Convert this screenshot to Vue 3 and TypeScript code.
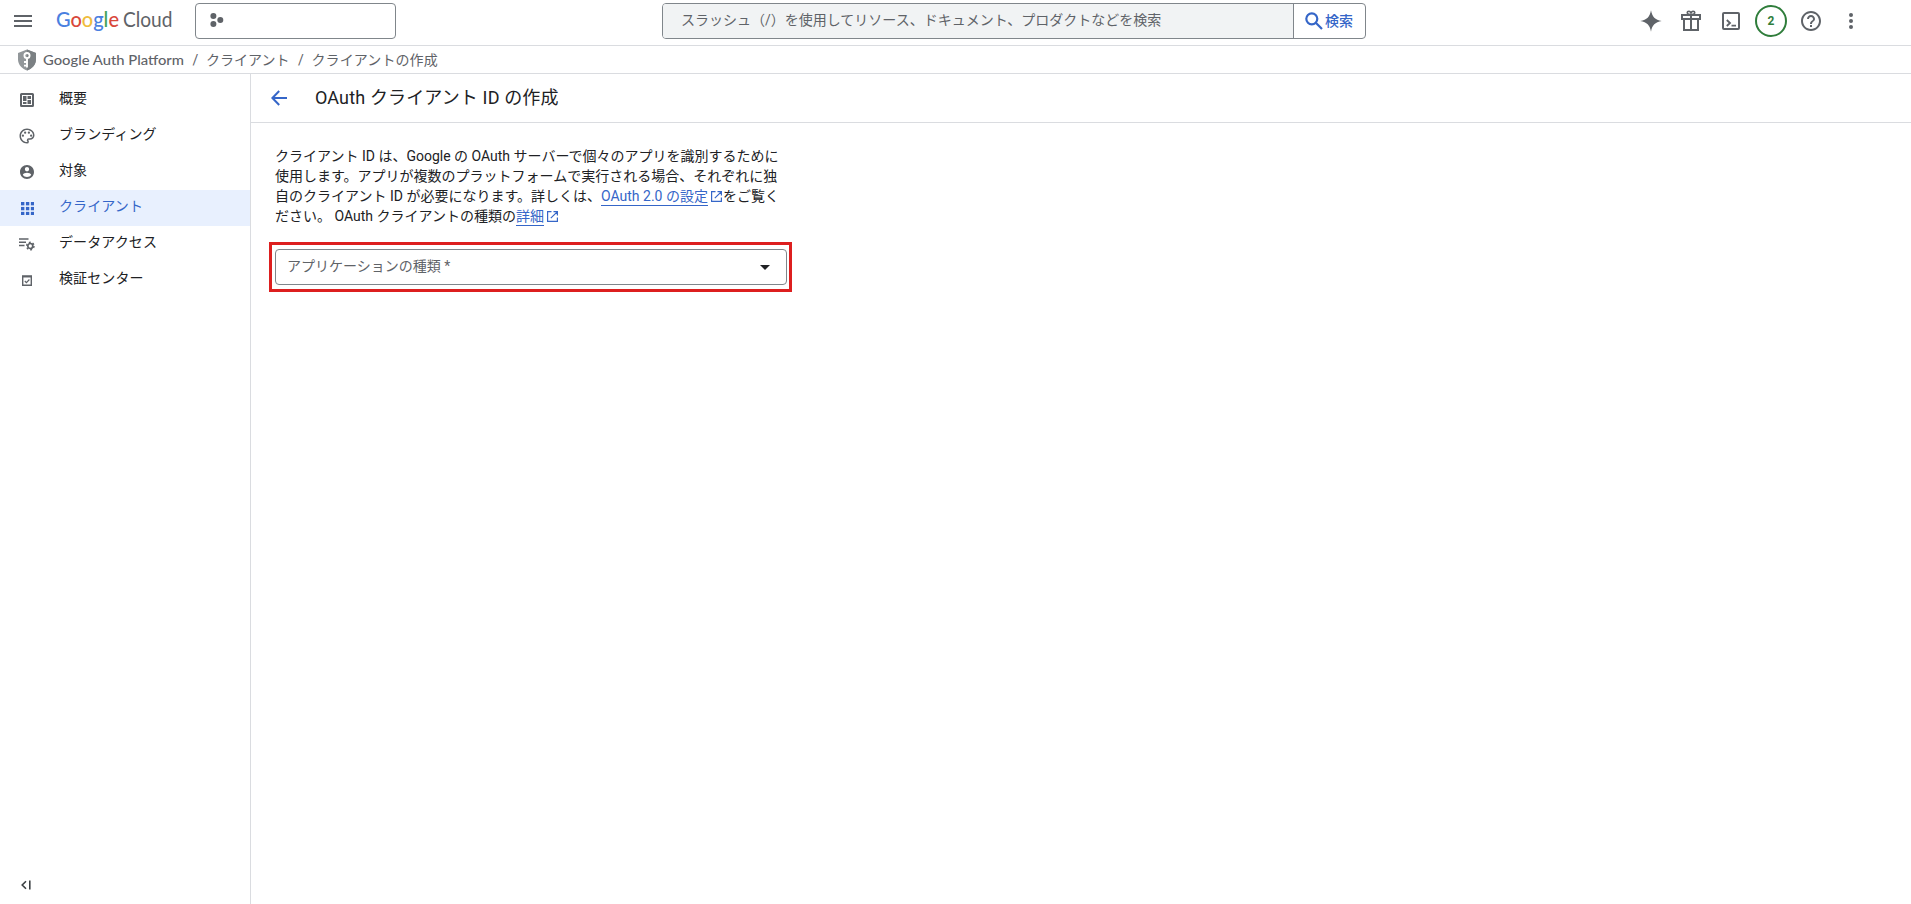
<script setup lang="ts">
interface NavItem {
  label: string
  icon: string
  active?: boolean
}

const navItems: NavItem[] = [
  { label: '概要', icon: 'overview' },
  { label: 'ブランディング', icon: 'palette' },
  { label: '対象', icon: 'person' },
  { label: 'クライアント', icon: 'apps', active: true },
  { label: 'データアクセス', icon: 'data' },
  { label: '検証センター', icon: 'verify' },
]

const gridSteps = [0, 4.7, 9.4]
</script>

<template>
  <div class="page">
    <header class="topbar">
      <button class="menu" aria-label="menu"><i /><i /><i /></button>
      <svg class="logo" width="118" height="30" viewBox="0 0 118 30">
        <text x="0" y="21" textLength="63" lengthAdjust="spacingAndGlyphs" class="google"><tspan fill="#4a80e0">G</tspan><tspan fill="#d9483b">o</tspan><tspan fill="#efbc3d">o</tspan><tspan fill="#4a80e0">g</tspan><tspan fill="#45a35b">l</tspan><tspan fill="#d9483b">e</tspan></text>
        <text x="67" y="21" textLength="49.500" lengthAdjust="spacingAndGlyphs" class="cloud">Cloud</text>
      </svg>
      <div class="project">
        <svg width="14" height="14" viewBox="0 0 14 14" fill="#5f6368"><circle cx="3.400" cy="3" r="3" /><circle cx="3.400" cy="11" r="3" /><circle cx="10.300" cy="7" r="3" /></svg>
      </div>
      <div class="search">
        <div class="search-field">スラッシュ（/）を使用してリソース、ドキュメント、プロダクトなどを検索</div>
        <button class="search-btn">
          <svg width="18" height="18" viewBox="0 0 18 18" fill="none" stroke="#3566c8" stroke-width="2.200"><circle cx="6.800" cy="6.800" r="5.500" /><path d="M10.800 10.800 17 17" /></svg>
          <span>検索</span>
        </button>
      </div>
      <div class="tools">
        <svg width="24" height="24" viewBox="0 0 24 24" fill="#5f6368"><path d="M12 1.300C13.200 8 16 10.800 22.700 12 16 13.200 13.200 16 12 22.700 10.800 16 8 13.200 1.300 12 8 10.800 10.800 8 12 1.300Z" /></svg>
        <svg width="24" height="24" viewBox="0 0 24 24" fill="none" stroke="#5f6368" stroke-width="2"><path d="M3 6h18v4H3zM5 10v11h14V10M12 6v15" /><path d="M12 5.500C9.500 5.500 8.200 4.800 8.200 3.500S11.500 1.200 12 4.500C12.500 1.200 15.800 2.200 15.800 3.500S14.500 5.500 12 5.500Z" stroke-width="1.500" /></svg>
        <svg width="24" height="24" viewBox="0 0 24 24" fill="none" stroke="#5f6368" stroke-width="2"><rect x="4" y="4" width="16" height="16" rx="1" /><path d="M7.800 11 11 14 7.800 17M12.500 16.700h4.500" stroke-width="1.800" /></svg>
        <span class="badge">2</span>
        <svg width="24" height="24" viewBox="0 0 24 24" fill="#5f6368"><path d="M11 18h2v-2h-2v2zm1-16C6.480 2 2 6.480 2 12s4.480 10 10 10 10-4.480 10-10S17.520 2 12 2zm0 18c-4.410 0-8-3.590-8-8s3.590-8 8-8 8 3.590 8 8-3.590 8-8 8zm0-14c-2.210 0-4 1.790-4 4h2c0-1.100.9-2 2-2s2 .9 2 2c0 2-3 1.750-3 5h2c0-2.250 3-2.500 3-5 0-2.210-1.790-4-4-4z" /></svg>
        <svg width="24" height="24" viewBox="0 0 24 24" fill="#5f6368"><circle cx="12" cy="6" r="2" /><circle cx="12" cy="12" r="2" /><circle cx="12" cy="18" r="2" /></svg>
      </div>
    </header>

    <nav class="crumbs">
      <svg width="20" height="22" viewBox="0 0 20 22"><path d="M10 .5 19 4v6.500c0 5-3.800 9.300-9 11-5.200-1.700-9-6-9-11V4z" fill="#92979a" /><path d="M10 .5 19 4v6.500c0 5-3.800 9.300-9 11z" fill="#7b8083" /><circle cx="10" cy="6.600" r="2.600" fill="none" stroke="#fff" stroke-width="1.800" /><path d="M10 9.500V18.500M10 13H7M10 16.600H7" stroke="#fff" stroke-width="1.900" /></svg>
      <svg class="crumb-product" width="142" height="22" viewBox="0 0 142 22"><text x="0" y="16" textLength="141" lengthAdjust="spacingAndGlyphs">Google Auth Platform</text></svg>
      <span class="sep">/</span>
      <span>クライアント</span>
      <span class="sep wide">/</span>
      <span class="current">クライアントの作成</span>
    </nav>

    <div class="body">
      <aside class="sidebar">
        <ul>
          <li v-for="item in navItems" :key="item.label" :class="{ active: item.active }">
            <svg v-if="item.icon === 'overview'" width="14" height="14" viewBox="0 0 14 14"><rect x="1" y="1" width="12" height="12" rx=".5" fill="none" stroke="currentColor" stroke-width="2" /><path d="M3 3h3.500v5H3zM7.500 3H11v3H7.500zM7.500 7H11v4H7.500zM3 9h3.500v2H3z" fill="currentColor" /></svg>
            <svg v-else-if="item.icon === 'palette'" width="18" height="18" viewBox="0 0 24 24" fill="currentColor"><path d="M12 22C6.490 22 2 17.510 2 12S6.490 2 12 2s10 4.040 10 9c0 3.310-2.690 6-6 6h-1.770c-.28 0-.5.22-.5.5 0 .12.05.23.13.33.41.47.64 1.060.64 1.670A2.500 2.500 0 0 1 12 22zm0-18c-4.410 0-8 3.590-8 8s3.590 8 8 8c.28 0 .5-.22.5-.5a.54.54 0 0 0-.14-.35c-.41-.46-.63-1.050-.63-1.650a2.500 2.500 0 0 1 2.500-2.500H16c2.210 0 4-1.790 4-4 0-3.860-3.590-7-8-7z" /><circle cx="6.500" cy="11.500" r="1.500" /><circle cx="9.500" cy="7.500" r="1.500" /><circle cx="14.500" cy="7.500" r="1.500" /><circle cx="17.500" cy="11.500" r="1.500" /></svg>
            <svg v-else-if="item.icon === 'person'" width="14" height="14" viewBox="2 2 20 20" fill="currentColor"><path d="M12 2C6.480 2 2 6.480 2 12s4.480 10 10 10 10-4.480 10-10S17.520 2 12 2zm0 3c1.660 0 3 1.340 3 3s-1.340 3-3 3-3-1.340-3-3 1.340-3 3-3zm0 14.200c-2.500 0-4.710-1.280-6-3.220.03-1.990 4-3.080 6-3.080 1.990 0 5.970 1.090 6 3.080-1.290 1.940-3.500 3.220-6 3.220z" /></svg>
            <svg v-else-if="item.icon === 'apps'" width="13" height="13" viewBox="0 0 12.400 12.400" fill="currentColor"><template v-for="y in gridSteps" :key="y"><rect v-for="x in gridSteps" :key="x" :x="x" :y="y" width="3.200" height="3.200" /></template></svg>
            <svg v-else-if="item.icon === 'data'" width="16" height="14" viewBox="0 0 16 14" fill="none" stroke="currentColor"><path d="M0 2h9.500M0 5.200h7M0 8.400h5.500" stroke-width="1.500" /><circle cx="11.300" cy="9" r="2.500" stroke-width="1.700" /><circle cx="11.300" cy="9" r="3.700" stroke-width="1.400" stroke-dasharray="1.937" /></svg>
            <svg v-else width="10" height="11" viewBox="0 0 10 11" fill="none" stroke="currentColor"><path d="M.7 1.500h8.600v8.800H.7z" stroke-width="1.400" /><path d="M0 1.300h10" stroke-width="2" /><path d="M2.800 6 4.400 7.600 7.400 4.500" stroke-width="1.200" /></svg>
            <span>{{ item.label }}</span>
          </li>
        </ul>
        <svg class="collapse" width="10" height="10" viewBox="0 0 10 10" fill="none" stroke="#3c4043" stroke-width="1.600"><path d="M5 1.200 1.200 5 5 8.800M8.800.5v9" /></svg>
      </aside>

      <main>
        <div class="title-row">
          <svg width="16" height="16" viewBox="0 0 16 16" fill="none" stroke="#3566c8" stroke-width="2"><path d="M16 8H1.500M8.200 1 1.400 8l6.800 7" /></svg>
          <h1>OAuth クライアント ID の作成</h1>
        </div>
        <section class="content">
          <p>
            <span class="line">クライアント ID は、Google の OAuth サーバーで個々のアプリを識別するために</span>
            <span class="line">使用します。アプリが複数のプラットフォームで実行される場合、それぞれに独</span>
            <span class="line">自のクライアント ID が必要になります。詳しくは、<a>OAuth 2.0 の設定</a><svg class="ext" width="11" height="11" viewBox="0 0 11 11"><path d="M4.500.6H.6v9.800h9.800V6.500M6.500.6h3.900v3.900M10.200.8 3.800 7.200" /></svg>をご覧く</span>
            <span class="line">ださい。 OAuth クライアントの種類の<a>詳細</a><svg class="ext" width="11" height="11" viewBox="0 0 11 11"><path d="M4.500.6H.6v9.800h9.800V6.500M6.500.6h3.900v3.900M10.200.8 3.800 7.200" /></svg></span>
          </p>
          <div class="highlight">
            <div class="select">
              <span>アプリケーションの種類 *</span>
              <svg width="10" height="5" viewBox="0 0 10 5"><path d="M0 0h10L5 5z" fill="#202124" /></svg>
            </div>
          </div>
        </section>
      </main>
    </div>
  </div>
</template>

<style>
body {
  margin: 0;
  background: #fff;
}
</style>

<style scoped>
.page {
  display: flex;
  flex-direction: column;
  height: 904px;
  overflow: hidden;
  background: #fff;
  color: #202124;
  font: 14px/20px Roboto, "Noto Sans CJK JP", sans-serif;
}
.page * {
  box-sizing: border-box;
}
svg {
  display: block;
  flex: none;
}
button {
  padding: 0;
  border: 0;
  background: none;
  font: inherit;
}
.topbar {
  display: flex;
  align-items: flex-start;
  flex: none;
  height: 46px;
  padding: 3px 48px 0 14px;
  border-bottom: 1px solid #dadce0;
}
.menu {
  display: flex;
  flex-direction: column;
  gap: 3px;
  width: 18px;
  margin-top: 12px;
}
.menu i {
  height: 2px;
  background: #5f6368;
}
.logo {
  margin: 3px 0 0 24px;
  overflow: visible;
}
.logo text {
  font-family: Lato, sans-serif;
  font-size: 20.500px;
  font-weight: 400;
}
.google {
  stroke-width: 0;
}
.google tspan {
  font-weight: 500;
}
.cloud {
  fill: #5f6368;
}
.project {
  display: flex;
  align-items: center;
  width: 201px;
  height: 36px;
  margin-left: 21px;
  padding: 0 0 3px 14px;
  border: 1px solid #80868b;
  border-radius: 4px;
}
.search {
  display: flex;
  width: 704px;
  height: 36px;
  margin-left: 266px;
  border: 1px solid #80868b;
  border-radius: 4px;
  overflow: hidden;
}
.search-field {
  width: 630px;
  padding: 6px 0 0 18px;
  background: #f1f3f4;
  color: #5f6368;
  white-space: nowrap;
}
.search-btn {
  display: flex;
  flex: 1;
  align-items: center;
  gap: 2px;
  padding-left: 11px;
  border-left: 1px solid #80868b;
  color: #3566c8;
  font-weight: 500;
}
.tools {
  display: flex;
  align-items: center;
  gap: 16px;
  height: 36px;
  margin-left: auto;
}
.badge {
  width: 32px;
  height: 32px;
  margin: 0 -4px;
  border: 2px solid #2f7d3b;
  border-radius: 50%;
  color: #2f7d3b;
  font-size: 12px;
  font-weight: 700;
  line-height: 28px;
  text-align: center;
}
.crumbs {
  display: flex;
  align-items: center;
  flex: none;
  height: 28px;
  padding-left: 17px;
  border-bottom: 1px solid #dadce0;
  color: #5f6368;
  white-space: nowrap;
}
.crumb-product {
  margin-left: 6px;
  overflow: visible;
}
.crumb-product text {
  fill: #5f6368;
  font-family: Lato, sans-serif;
  font-size: 14px;
  font-weight: 500;
}
.sep {
  width: 21px;
  text-align: center;
}
.sep.wide {
  width: 22px;
  padding-left: 1px;
}
.current {
  letter-spacing: 0.1px;
}
.body {
  display: flex;
  flex: 1;
  min-height: 0;
}
.sidebar {
  display: flex;
  flex-direction: column;
  justify-content: space-between;
  width: 251px;
  border-right: 1px solid #dadce0;
}
.sidebar ul {
  margin: 0;
  padding: 8px 0 0;
  list-style: none;
}
.sidebar li {
  display: grid;
  grid-template-columns: 54px 1fr;
  align-items: center;
  height: 36px;
}
.sidebar li svg {
  justify-self: center;
  color: #5f6368;
}
.sidebar li span {
  padding: 0 0 4px 5px;
  letter-spacing: 0.1px;
}
.sidebar li.active {
  background: #e8f0fe;
  color: #3566c8;
}
.sidebar li.active svg {
  color: #3566c8;
}
.collapse {
  margin: 0 0 14px 21px;
}
main {
  flex: 1;
}
.title-row {
  display: flex;
  align-items: center;
  gap: 28px;
  height: 49px;
  padding-left: 20px;
  border-bottom: 1px solid #dadce0;
}
h1 {
  margin: 0;
  font-size: 18px;
  font-weight: 400;
  line-height: 24px;
  letter-spacing: 0.14px;
}
.content {
  padding: 23px 18px;
}
p {
  margin: 0 0 16px 6px;
}
.line {
  display: block;
  height: 20px;
  white-space: nowrap;
}
a {
  display: inline-block;
  height: 20px;
  border-bottom: 1px solid #3566c8;
  color: #3566c8;
  vertical-align: top;
}
.ext {
  display: inline-block;
  margin: 0 1px 0 3px;
  vertical-align: -1px;
  fill: none;
  stroke: #3566c8;
  stroke-width: 1.200;
}
.highlight {
  width: 523px;
  height: 50px;
  padding: 4px 2px 4px 3px;
  border: 3px solid #dd1f1f;
}
.select {
  display: flex;
  align-items: center;
  justify-content: space-between;
  height: 36px;
  padding: 0 16px 0 11px;
  border: 1px solid #80868b;
  border-radius: 4px;
  color: #5f6368;
}
.select span {
  padding-bottom: 2px;
}
</style>
